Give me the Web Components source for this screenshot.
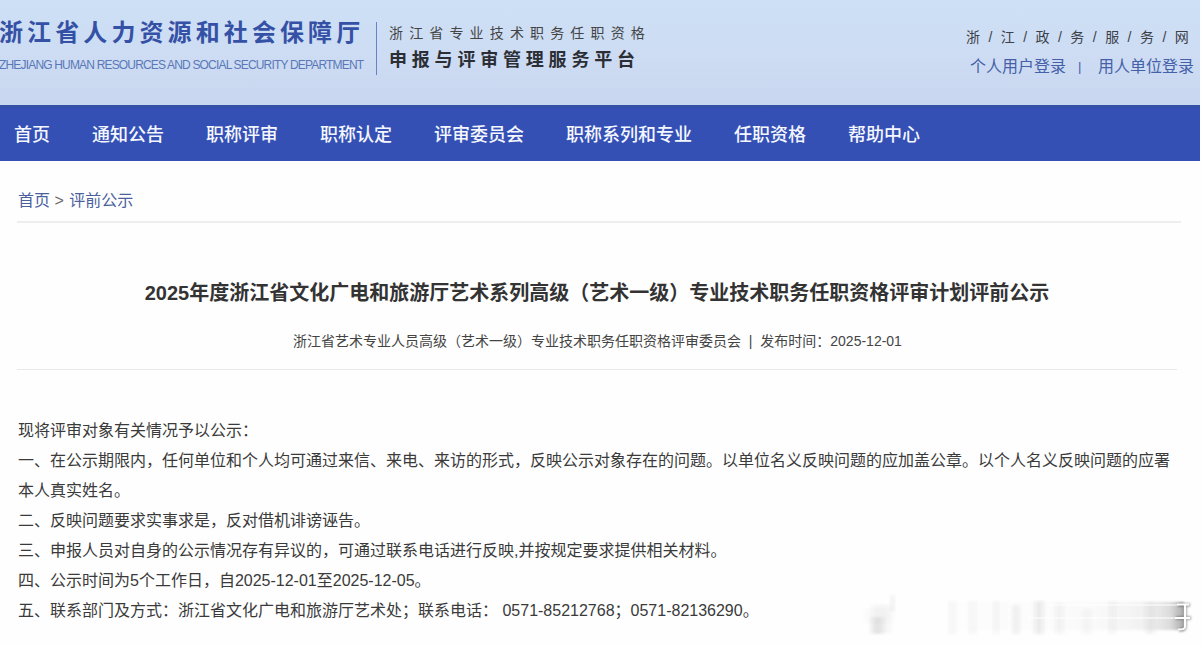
<!DOCTYPE html>
<html lang="zh-CN">
<head>
<meta charset="utf-8">
<title>评前公示</title>
<style>
  html, body {
    margin: 0;
    background: #fefefe;
  }
  body {
    position: relative;
    height: 645px;
    overflow: hidden;
    font-family: "Liberation Sans", "Noto Sans CJK SC", sans-serif;
    color: #333;
  }
</style>
</head>
<body>
<notice-page></notice-page>
<script>
class SiteHeader extends HTMLElement {
  constructor() {
    super();
    this.attachShadow({ mode: 'open' });
  }

  connectedCallback() {
    const style = `
      :host {
        display: flex;
        box-sizing: border-box;
        height: 105px;
        justify-content: space-between;
        background: linear-gradient(#cde0f6, #cddcf3 55%, #c8d7ef);
        white-space: nowrap;
      }
      .brand {
        display: flex;
        padding-top: 22px;
      }
      .dept {
        width: 376px;
        margin-top: -7px;
      }
      .cn {
        margin-left: -1px;
        font-size: 24px;
        font-weight: 700;
        line-height: 36px;
        letter-spacing: 4.1px;
        color: #3551a6;
      }
      .en {
        margin: 6px 0 0 -1px;
        font-size: 12px;
        line-height: 16px;
        letter-spacing: -0.825px;
        color: #5a78b8;
      }
      .platform {
        height: 53px;
        box-sizing: border-box;
        border-left: 1px solid #6684c2;
        padding-left: 12px;
      }
      .line1 {
        font-size: 14px;
        line-height: 22px;
        letter-spacing: 6.15px;
        color: #444;
      }
      .line2 {
        margin-top: 2px;
        font-size: 18px;
        font-weight: 700;
        line-height: 28px;
        letter-spacing: 4.8px;
        color: #2b2e35;
      }
      .side {
        width: 234px;
        padding-top: 27px;
      }
      .gov {
        font-size: 14px;
        line-height: 21px;
        letter-spacing: 2.28px;
        color: #3c4048;
      }
      .login {
        display: flex;
        margin: 7px 0 0 4px;
        font-size: 16px;
        line-height: 24px;
        color: #4460a8;
      }
      .login i {
        width: 32px;
        font-size: 13px;
        font-style: normal;
        text-indent: 12px;
      }
    `;
    this.shadowRoot.innerHTML = `
      <style>${style}</style>
      <div class="brand">
        <div class="dept">
          <div class="cn">浙江省人力资源和社会保障厅</div>
          <div class="en">ZHEJIANG HUMAN RESOURCES AND SOCIAL SECURITY DEPARTMENT</div>
        </div>
        <div class="platform">
          <div class="line1">浙江省专业技术职务任职资格</div>
          <div class="line2">申报与评审管理服务平台</div>
        </div>
      </div>
      <div class="side">
        <div class="gov">浙 / 江 / 政 / 务 / 服 / 务 / 网</div>
        <div class="login"><span>个人用户登录</span><i>|</i><span>用人单位登录</span></div>
      </div>
    `;
  }
}

class SiteNav extends HTMLElement {
  constructor() {
    super();
    this.attachShadow({ mode: 'open' });
    this.items = ['首页', '通知公告', '职称评审', '职称认定', '评审委员会', '职称系列和专业', '任职资格', '帮助中心'];
  }

  connectedCallback() {
    const style = `
      :host {
        display: block;
      }
      nav {
        display: flex;
        box-sizing: border-box;
        gap: 42px;
        height: 56px;
        padding-left: 14px;
        border-top: 2px solid #34529f;
        background: #3450b5;
        font-size: 18px;
        font-weight: 500;
        line-height: 56px;
        color: #f4f7ff;
        white-space: nowrap;
      }
    `;
    this.shadowRoot.innerHTML = `
      <style>${style}</style>
      <nav>${this.items.map(item => `<span>${item}</span>`).join('')}</nav>
    `;
  }
}

class BreadCrumb extends HTMLElement {
  constructor() {
    super();
    this.attachShadow({ mode: 'open' });
    this.shadowRoot.innerHTML = `
      <style>
        :host {
          display: block;
          box-sizing: border-box;
          height: 62px;
          margin: 0 19px 0 17px;
          padding: 28px 0 0 1px;
          border-bottom: 2px solid #eee;
          font-size: 16px;
          line-height: 24px;
          color: #4a5f9c;
        }
        i {
          margin-right: 1px;
          color: #666;
          font-style: normal;
        }
      </style>
      <span>首页</span> <i>&gt;</i> <span>评前公示</span>
    `;
  }
}

class NoticeArticle extends HTMLElement {
  constructor() {
    super();
    this.attachShadow({ mode: 'open' });
    this.shadowRoot.innerHTML = `
      <style>
        :host {
          display: block;
          padding: 55px 23px 0 17px;
        }
        header {
          border-bottom: 1px solid #e9e9e9;
          text-align: center;
          white-space: nowrap;
        }
        .title {
          display: block;
          font-size: 20px;
          font-weight: 700;
          line-height: 30px;
          color: #333;
        }
        .meta {
          display: block;
          padding: 22px 0 17px 1px;
          font-size: 14px;
          line-height: 22px;
          color: #444;
        }
        .text {
          display: block;
          padding: 46px 0 0 1px;
          font-size: 16px;
          line-height: 30px;
          color: #3a3a3a;
        }
      </style>
      <header>
        <slot class="title" name="title"></slot>
        <slot class="meta" name="meta"></slot>
      </header>
      <slot class="text"></slot>
    `;
  }
}

// Faded corner mark: smeared vertical streaks that end in a white stroke
class CornerMark extends HTMLElement {
  constructor() {
    super();
    this.attachShadow({ mode: 'open' });
    // x, y, width, height, opacity
    this.streaks = [
      [6, 14, 30, 14, 0.025], [14, 10, 18, 28, 0.05], [14, 22, 11, 17, 0.1], [33, 0, 3, 16, 0.07],
      [92, 6, 5, 33, 0.06], [112, 6, 5, 33, 0.06], [136, 6, 4, 33, 0.06],
      [155, 10, 6, 29, 0.08], [177, 6, 8, 33, 0.09], [198, 8, 7, 31, 0.06],
      [225, 14, 7, 25, 0.05], [252, 6, 5, 33, 0.06], [288, 7, 8, 32, 0.07]
    ];
  }

  connectedCallback() {
    this.shadowRoot.innerHTML = `
      <style>
        :host {
          display: block;
          position: absolute;
          left: 858px;
          top: 595px;
        }
        svg {
          display: block;
          overflow: visible;
        }
      </style>
      <svg width="336" height="42" viewBox="0 0 336 42" aria-hidden="true">
        <defs>
          <linearGradient id="fade">
            <stop offset="0" stop-color="#888" stop-opacity="0"/>
            <stop offset="0.6" stop-color="#888" stop-opacity="0.03"/>
            <stop offset="0.85" stop-color="#777" stop-opacity="0.1"/>
            <stop offset="0.94" stop-color="#666" stop-opacity="0.22"/>
            <stop offset="1" stop-color="#555" stop-opacity="0.5"/>
          </linearGradient>
          <filter id="soft" x="-50%" y="-20%" width="200%" height="140%"><feGaussianBlur stdDeviation="2 0.9"/></filter>
          <filter id="edge" x="-50%" y="-50%" width="200%" height="200%"><feGaussianBlur stdDeviation="0.8"/></filter>
        </defs>
        ${this.streaks.map(([x, y, w, h, o]) => `<rect x="${x}" y="${y}" width="${w}" height="${h}" fill="#444" fill-opacity="${o}" filter="url(#soft)"/>`).join('')}
        <rect x="90" y="7" width="236" height="28" fill="url(#fade)" filter="url(#edge)"/>
        <path d="M190 10H320M170 23H320" stroke="#fff" stroke-width="1.4" stroke-opacity="0.7"/>
        <path d="M320 10H332M318 23H333M327 10V32Q327 35 321 35" fill="none" stroke="#555" stroke-opacity="0.55" stroke-width="3.5" filter="url(#edge)"/>
        <path d="M319 9.5H331M317 23H332M327 9.5V32Q327 34.5 320 34.5" fill="none" stroke="#fff" stroke-width="2"/>
      </svg>
    `;
  }
}

class NoticePage extends HTMLElement {
  constructor() {
    super();
    this.attachShadow({ mode: 'open' });
    this.shadowRoot.innerHTML = `
      <style>
        :host {
          display: block;
          width: 1200px;
        }
        p {
          margin: 0;
        }
      </style>
      <site-header></site-header>
      <site-nav></site-nav>
      <bread-crumb></bread-crumb>
      <notice-article>
        <span slot="title">2025年度浙江省文化广电和旅游厅艺术系列高级（艺术一级）专业技术职务任职资格评审计划评前公示</span>
        <span slot="meta">浙江省艺术专业人员高级（艺术一级）专业技术职务任职资格评审委员会&nbsp; | &nbsp;发布时间：2025-12-01</span>
        <p>现将评审对象有关情况予以公示：</p>
        <p>一、在公示期限内，任何单位和个人均可通过来信、来电、来访的形式，反映公示对象存在的问题。以单位名义反映问题的应加盖公章。以个人名义反映问题的应署本人真实姓名。</p>
        <p>二、反映问题要求实事求是，反对借机诽谤诬告。</p>
        <p>三、申报人员对自身的公示情况存有异议的，可通过联系电话进行反映,并按规定要求提供相关材料。</p>
        <p>四、公示时间为5个工作日，自2025-12-01至2025-12-05。</p>
        <p>五、联系部门及方式：浙江省文化广电和旅游厅艺术处；联系电话： 0571-85212768；0571-82136290。</p>
      </notice-article>
      <corner-mark></corner-mark>
    `;
  }
}

customElements.define('site-header', SiteHeader);
customElements.define('site-nav', SiteNav);
customElements.define('bread-crumb', BreadCrumb);
customElements.define('notice-article', NoticeArticle);
customElements.define('corner-mark', CornerMark);
customElements.define('notice-page', NoticePage);
</script>
</body>
</html>
